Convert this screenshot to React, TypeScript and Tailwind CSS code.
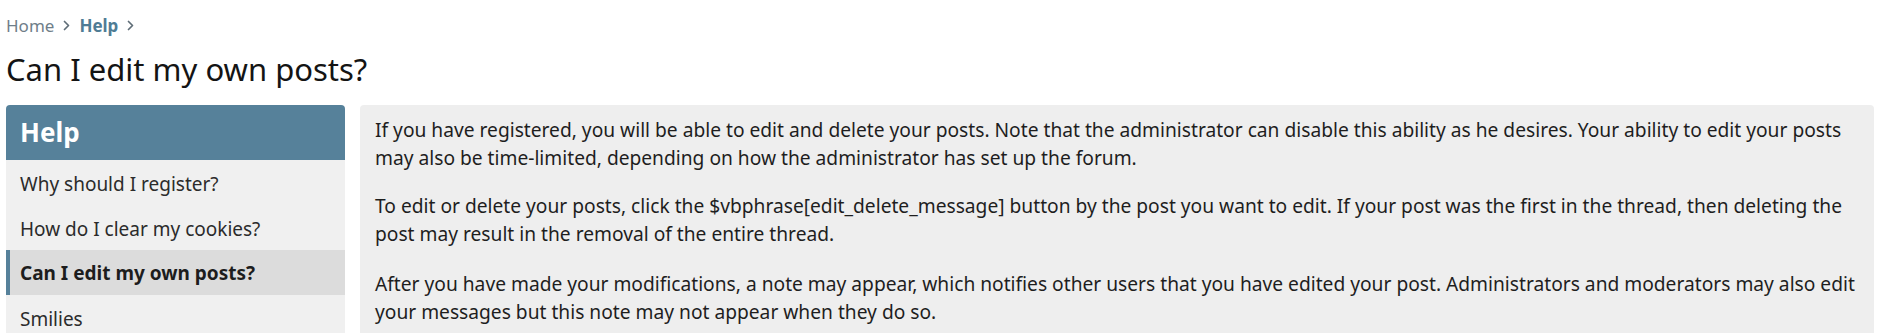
import React from "react";

const font = { fontFamily: '"Noto Sans", "Open Sans", sans-serif' };

function Chevron() {
  return (
    <svg width="7" height="11" viewBox="0 0 7 11" className="mx-[9px] shrink-0" aria-hidden="true">
      <path d="M1.5 1.5 L5.5 5.5 L1.5 9.5" fill="none" stroke="#5f6d77" strokeWidth="1.7" strokeLinecap="round" strokeLinejoin="round" />
    </svg>
  );
}

export default function App() {
  return (
    <div className="min-h-[333px] bg-white pl-[6px] pr-[15px] text-[#141414]" style={font}>
      <nav className="flex items-center h-[18px] mt-[16px] text-[17px] leading-none">
        <span className="text-[#6f7e89]">Home</span>
        <Chevron />
        <span className="font-bold text-[#4f7c95]">Help</span>
        <Chevron />
      </nav>
      <h1 className="mt-[15px] text-[31px] leading-[40px] font-normal">Can I edit my own posts?</h1>
      <div className="mt-[16px] flex gap-[15px] items-start">
        <aside className="w-[339px] shrink-0 rounded-t-[4px] overflow-hidden">
          <div className="h-[55px] bg-[#56819a] flex items-center px-[14px]">
            <span className="text-white font-bold text-[26px]">Help</span>
          </div>
          <ul className="bg-[#f0f0f0] text-[19px] text-[#2b2b2b]">
            <li className="h-[45px] flex items-center px-[14px] pt-[3px]">Why should I register?</li>
            <li className="h-[45px] flex items-center px-[14px] pt-[3px]">How do I clear my cookies?</li>
            <li className="h-[45px] flex items-center pl-[10px] pr-[14px] pt-[1px] border-l-4 border-[#56819a] bg-[#dcdcdc] font-bold text-[#1d1d1d]">
              Can I edit my own posts?
            </li>
            <li className="h-[45px] flex items-center px-[14px] pt-[3px]">Smilies</li>
          </ul>
        </aside>
        <main className="flex-1 bg-[#eeeeee] rounded-[4px] px-[15px] pt-[11px] pb-[12px] text-[19.2px] leading-[28px] text-[#1e1e1e]">
          <p>
            If you have registered, you will be able to edit and delete your posts. Note that the administrator can disable this ability as he desires. Your ability to edit your posts may also be time-limited, depending on how the administrator has set up the forum.
          </p>
          <p className="mt-[20px]">
            To edit or delete your posts, click the $vbphrase[edit_delete_message] button by the post you want to edit. If your post was the first in the thread, then deleting the post may result in the removal of the entire thread.
          </p>
          <p className="mt-[22px]">
            After you have made your modifications, a note may appear, which notifies other users that you have edited your post. Administrators and moderators may also edit your messages but this note may not appear when they do so.
          </p>
        </main>
      </div>
    </div>
  );
}
